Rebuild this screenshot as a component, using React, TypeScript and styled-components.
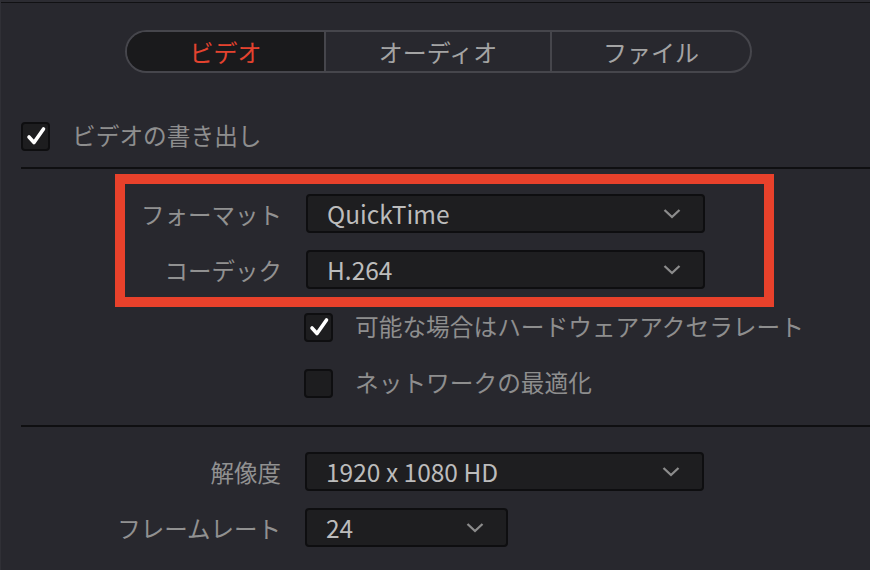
import React from "react"
import styled, { createGlobalStyle } from "styled-components"

const GlobalStyle = createGlobalStyle`
  html, body {
    margin: 0;
    padding: 0;
    background: #28282e;
  }
  body {
    font-family: "Noto Sans CJK JP", "Noto Sans", sans-serif;
  }
`

const Page = styled.div`
  width: 870px;
  height: 570px;
  overflow: hidden;
  box-sizing: border-box;
  background: #28282e;
  border-left: 1px solid #303036;
  box-shadow: inset 0 2px 0 #2c2c32, inset 0 3px 0 #111113;
  display: flex;
  flex-direction: column;
`

const TabBar = styled.div`
  margin: 30px 0 0 124px;
  width: 627px;
  height: 43px;
  box-sizing: border-box;
  border: 2px solid #46464c;
  border-radius: 22px;
  display: grid;
  grid-template-columns: 197px 226px 1fr;
  overflow: hidden;
`

const Tab = styled.div<{ $active?: boolean }>`
  display: flex;
  align-items: center;
  justify-content: center;
  font-size: 24px;
  color: ${(p) => (p.$active ? "#e5432f" : "#a4a4a4")};
  background: ${(p) => (p.$active ? "#1a1a1c" : "transparent")};
  & + & {
    border-left: 2px solid #46464c;
  }
`

const CheckRow = styled.div<{ $indent: number; $top: number }>`
  display: flex;
  align-items: center;
  gap: 22px;
  margin: ${(p) => p.$top}px 0 0 ${(p) => p.$indent}px;
  height: 30px;
`

const Box = styled.div`
  width: 29px;
  height: 29px;
  box-sizing: border-box;
  border: 2px solid #0e0e10;
  border-radius: 4px;
  background: #1d1d1f;
  display: flex;
  align-items: center;
  justify-content: center;
`

const CheckText = styled.span`
  font-size: 23.7px;
  color: #8e8e8e;
  line-height: 1;
`

const Divider = styled.div<{ $top: number }>`
  margin: ${(p) => p.$top}px 0 0 20px;
  height: 2px;
  background: #0f0f11;
`

const Highlight = styled.div`
  margin: 5px 0 0 114px;
  width: 659px;
  box-sizing: border-box;
  border: 10px solid #e8412b;
  padding: 10px 0 8px;
  display: flex;
  flex-direction: column;
  gap: 17px;
`

const Form = styled.div<{ $top: number }>`
  margin-top: ${(p) => p.$top}px;
  display: flex;
  flex-direction: column;
  gap: 17px;
`

const FieldRow = styled.div`
  display: flex;
  align-items: center;
  gap: 24px;
`

const Label = styled.span<{ $width: number }>`
  width: ${(p) => p.$width}px;
  text-align: right;
  font-size: 23.5px;
  color: #919191;
  white-space: nowrap;
`

const Select = styled.div<{ $width: number }>`
  width: ${(p) => p.$width}px;
  height: 39px;
  box-sizing: border-box;
  border: 2px solid #0e0e10;
  border-radius: 4px;
  background: #1e1e20;
  display: flex;
  align-items: center;
  justify-content: space-between;
  padding: 0 22px 0 19px;
  font-size: 24.5px;
  color: #bcbcbc;
`

const Chevron = () => (
  <svg width="18" height="11" viewBox="0 0 18 11">
    <polyline points="1.5,2 9,9 16.5,2" fill="none" stroke="#8c8c8c" strokeWidth="2.3" />
  </svg>
)

const Check = ({ on }: { on?: boolean }) => (
  <Box>
    {on && (
      <svg width="22" height="22" viewBox="0 0 22 22">
        <path d="M4 12 L9 17.5 L18.5 4" fill="none" stroke="#ffffff" strokeWidth="3.6" strokeLinecap="round" strokeLinejoin="round" />
      </svg>
    )}
  </Box>
)

const Dropdown = ({ value, width }: { value: string; width: number }) => (
  <Select $width={width}>
    <span>{value}</span>
    <Chevron />
  </Select>
)

export default function App() {
  return (
    <Page>
      <GlobalStyle />
      <TabBar>
        <Tab $active>ビデオ</Tab>
        <Tab>オーディオ</Tab>
        <Tab>ファイル</Tab>
      </TabBar>

      <CheckRow $indent={20} $top={48}>
        <Check on />
        <CheckText>ビデオの書き出し</CheckText>
      </CheckRow>

      <Divider $top={16} />

      <Highlight>
        <FieldRow>
          <Label $width={157}>フォーマット</Label>
          <Dropdown value="QuickTime" width={399} />
        </FieldRow>
        <FieldRow>
          <Label $width={157}>コーデック</Label>
          <Dropdown value="H.264" width={399} />
        </FieldRow>
      </Highlight>

      <CheckRow $indent={303} $top={5}>
        <Check on />
        <CheckText>可能な場合はハードウェアアクセラレート</CheckText>
      </CheckRow>
      <CheckRow $indent={303} $top={26}>
        <Check />
        <CheckText>ネットワークの最適化</CheckText>
      </CheckRow>

      <Divider $top={27} />

      <Form $top={25}>
        <FieldRow>
          <Label $width={280}>解像度</Label>
          <Dropdown value="1920 x 1080 HD" width={399} />
        </FieldRow>
        <FieldRow>
          <Label $width={280}>フレームレート</Label>
          <Dropdown value="24" width={203} />
        </FieldRow>
      </Form>
    </Page>
  )
}
